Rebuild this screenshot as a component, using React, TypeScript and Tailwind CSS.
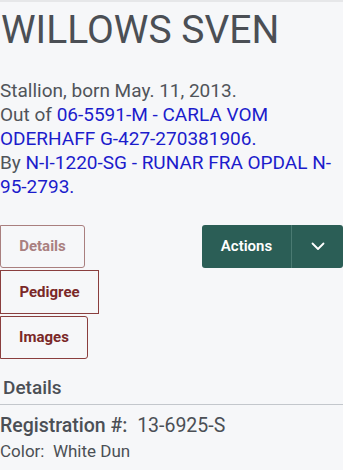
import React from "react";

export default function App() {
  return (
    <div className="min-h-[470px] w-[343px] overflow-hidden bg-[#f6f7f9] font-['Roboto',sans-serif] border-t-2 border-[#e6e7e9]">
      <h1 className="mt-[4px] text-[39px] leading-[48px] text-[#4b4f55] pl-[1px]">
        WILLOWS SVEN
      </h1>
      <div className="mt-[25px] text-[19px] leading-6 text-[#50545a]">
        <p>Stallion, born May. 11, 2013.</p>
        <p>
          Out of <a className="text-[#1c1ccc]">06-5591-M - CARLA VOM ODERHAFF G-427-270381906.</a>
        </p>
        <p>
          By <a className="text-[#1c1ccc]">N-I-1220-SG - RUNAR FRA OPDAL N-95-2793.</a>
        </p>
      </div>
      <div className="mt-[26px] flex items-start justify-between">
        <div className="flex flex-col items-start gap-[2px]">
          <div className="w-[85px] h-[43px] flex items-center justify-center border border-[#a97f7f] rounded-[3px] rounded-tl-none text-[15px] font-bold text-[#a98080]">
            Details
          </div>
          <div className="w-[99px] h-[44px] flex items-center justify-center border border-[#8a3e3e] text-[15px] font-bold text-[#7a2828]">
            Pedigree
          </div>
          <div className="w-[88px] h-[43px] flex items-center justify-center border border-[#8a3e3e] rounded-[3px] rounded-l-none text-[15px] font-bold text-[#7a2828]">
            Images
          </div>
        </div>
        <div className="flex h-[43px] w-[141px] rounded-[3px] bg-[#2b5e56] text-white">
          <div className="w-[90px] flex items-center justify-center text-[15px] font-semibold border-r border-[#4a7a72]">
            Actions
          </div>
          <div className="flex-1 flex items-center justify-center">
            <svg width="14" height="9" viewBox="0 0 14 9" fill="none">
              <path d="M1.5 1.5L7 7L12.5 1.5" stroke="white" strokeWidth="1.8" strokeLinecap="round" strokeLinejoin="round" />
            </svg>
          </div>
        </div>
      </div>
      <div className="mt-[17px] pl-[3px] text-[19px] leading-6 font-medium text-[#4b4f55] pb-[4px] border-b border-[#c3c7cc]">
        Details
      </div>
      <div className="mt-[9px] text-[19.5px] leading-6 text-[#4b4f55]">
        <span className="font-medium">Registration #:</span>&nbsp; 13-6925-S
      </div>
      <div className="mt-[1px] text-[17px] leading-6 text-[#4b4f55]">
        <span>Color:</span>&nbsp; White Dun
      </div>
    </div>
  );
}
